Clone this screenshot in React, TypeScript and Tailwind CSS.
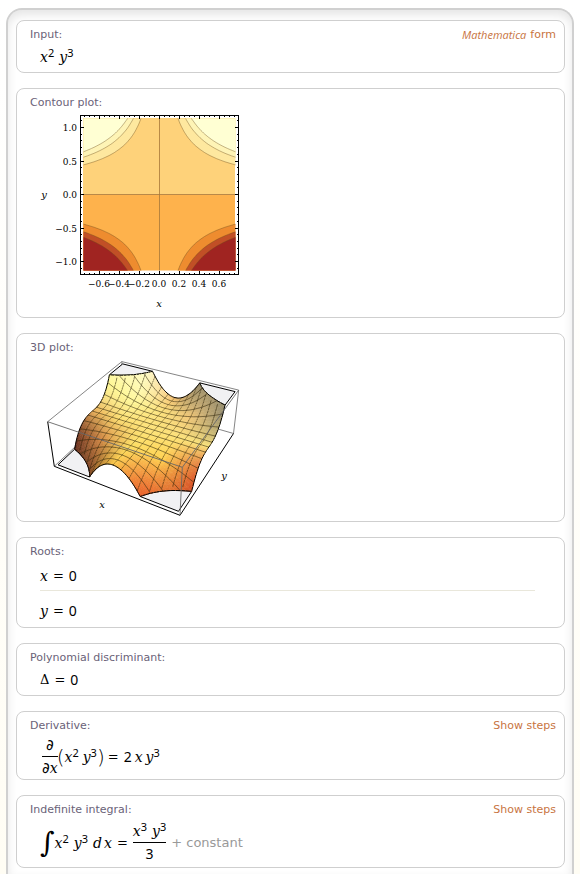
import type { ReactNode } from "react";

const X_MAX = 0.76;
const Y_MAX = 1.135;
const Z_MAX = 0.15;

type Point = [number, number];

const toPoints = (points: Point[]) =>
  points.map(([x, y]) => `${x.toFixed(1)},${y.toFixed(1)}`).join(" ");

/* ---------- contour plot ---------- */

const CX = 159.5;
const CY = 194.5;

// Level curve of x^2 y^3 = level, in one quadrant
const levelCurve = (level: number, sx: number, sy: number): Point[] => {
  const points: Point[] = [];
  const yStart = Math.cbrt(level / (X_MAX * X_MAX));
  for (let i = 0; i <= 30; i++) {
    const y = yStart + ((Y_MAX - yStart) * i) / 30;
    const x = Math.sqrt(level / (y * y * y));
    points.push([CX + sx * x * 100, CY - sy * y * 67]);
  }
  return points;
};

const bands = [
  { level: 0.05, top: "#fee89f", bottom: "#ee8c2f" },
  { level: 0.1, top: "#fef4b6", bottom: "#c14f26" },
  { level: 0.15, top: "#ffffd3", bottom: "#a02421" },
];

const xTicks = Array.from({ length: 31 }, (_, i) => i - 15);
const yTicks = Array.from({ length: 23 }, (_, i) => i - 11);
const xLabels = ["−0.6", "−0.4", "−0.2", "0.0", "0.2", "0.4", "0.6"];
const yLabels = ["1.0", "0.5", "0.0", "−0.5", "−1.0"];

const ContourPlot = () => (
  <svg width="220" height="200" viewBox="30 111 220 200" role="img" aria-label="Contour plot">
    <rect x="83" y="118" width="152" height="76.5" fill="#fed27a" />
    <rect x="83" y="194.5" width="152" height="76" fill="#feb24c" />
    {bands.map((band) =>
      [-1, 1].map((sx) =>
        [-1, 1].map((sy) => {
          const curve = levelCurve(band.level, sx, sy);
          const corner: Point = [CX + sx * 76, CY - sy * 76];
          return (
            <g key={`${band.level}${sx}${sy}`}>
              <polygon points={toPoints([...curve, corner])} fill={sy > 0 ? band.top : band.bottom} />
              <polyline points={toPoints(curve)} fill="none" stroke="#6b4a1c" strokeOpacity="0.5" strokeWidth="0.8" />
            </g>
          );
        })
      )
    )}
    <path d="M83.5 194.5H235.5M159.5 118V270.5" stroke="#a8783a" strokeOpacity="0.8" />
    <rect x="80.5" y="115.5" width="158" height="159" fill="none" stroke="#000" />
    {xTicks.map((t) => {
      const x = CX + t * 5;
      const size = t % 4 === 0 ? 4 : 2;
      return <path key={t} d={`M${x} 115v${size}M${x} 275v${-size}`} stroke="#000" />;
    })}
    {yTicks.map((t) => {
      const y = Math.round(194 - t * 6.7) + 0.5;
      const size = t % 5 === 0 ? 4 : 2;
      return <path key={t} d={`M80 ${y}h${size}M239 ${y}h${-size}`} stroke="#000" />;
    })}
    <g className="font-['DejaVu_Serif',serif] text-[9px]">
      {yLabels.map((label, i) => (
        <text key={label} x="77" y={131 + Math.round(i * 33.5)} textAnchor="end">
          {label}
        </text>
      ))}
      {xLabels.map((label, i) => (
        <text key={label} x={99 + i * 20} y="287" textAnchor="middle">
          {label}
        </text>
      ))}
      <text x="44" y="198" textAnchor="middle" className="text-[10px] italic">y</text>
      <text x="159" y="307" textAnchor="middle" className="text-[10px] italic">x</text>
    </g>
  </svg>
);

/* ---------- 3D plot ---------- */

// Perspective projection of the unit box
const project = (u: number, v: number, w: number): Point => {
  const depth = 1 - 0.1315 * u + 0.205 * v - 0.0639 * w;
  return [
    (54.3 + 102.03 * u + 94.33 * v - 9.65 * w) / depth,
    (466.3 - 18.76 * u + 17.82 * v - 71.55 * w) / depth,
  ];
};

const pad = (t: number) => 0.5 + t * 0.48;
const surface = (x: number, y: number) =>
  project(pad(x / X_MAX), pad(y / Y_MAX), pad((x * x * y * y * y) / Z_MAX));
const xLimit = (y: number) =>
  Math.min(X_MAX, Math.sqrt(Z_MAX / Math.max(Math.abs(y * y * y), 0.0001)));

// Lit colours, front row first, left to right
const palette = [
  [[10, 0, 0], [104, 48, 28], [253, 200, 72], [228, 76, 38], [170, 20, 16]],
  [[112, 52, 34], [214, 140, 70], [252, 222, 100], [255, 210, 80], [220, 88, 42]],
  [[232, 170, 86], [252, 222, 112], [253, 226, 120], [253, 226, 120], [250, 226, 122]],
  [[255, 248, 150], [255, 248, 156], [253, 226, 124], [240, 198, 120], [156, 146, 112]],
  [[255, 254, 232], [255, 252, 208], [244, 190, 112], [130, 126, 102], [100, 104, 94]],
];

const shade = (u: number, v: number) => {
  const i = Math.min(3, Math.floor(u * 4));
  const j = Math.min(3, Math.floor(v * 4));
  const fu = u * 4 - i;
  const fv = v * 4 - j;
  const channels = [0, 1, 2].map((c) =>
    Math.round(
      (palette[j][i][c] * (1 - fu) + palette[j][i + 1][c] * fu) * (1 - fv) +
        (palette[j + 1][i][c] * (1 - fu) + palette[j + 1][i + 1][c] * fu) * fv
    )
  );
  return `rgb(${channels.join(",")})`;
};

const ROWS = 64;
const COLS = 40;
const MESH = 16;

const rows = Array.from({ length: ROWS }, (_, i) => ROWS - 1 - i);
const cols = Array.from({ length: COLS }, (_, i) => i);
const meshXs = Array.from({ length: MESH - 1 }, (_, i) => ((i + 1) / MESH) * 2 * X_MAX - X_MAX);

const rowLine = (y: number) =>
  Array.from({ length: COLS + 1 }, (_, i) => surface(((2 * i) / COLS - 1) * xLimit(y), y));

const SurfaceRow = ({ row }: { row: number }) => {
  const y0 = ((2 * row) / ROWS - 1) * Y_MAX;
  const y1 = ((2 * (row + 1)) / ROWS - 1) * Y_MAX;
  const near = rowLine(y0);
  const far = rowLine(y1);
  return (
    <g>
      {cols.map((i) => {
        const x = ((2 * i + 1) / COLS - 1) * xLimit((y0 + y1) / 2);
        const fill = shade((x / X_MAX + 1) / 2, (row + 0.5) / ROWS);
        return (
          <polygon
            key={i}
            points={toPoints([near[i], near[i + 1], far[i + 1], far[i]])}
            fill={fill}
            stroke={fill}
            strokeWidth="0.6"
          />
        );
      })}
      {meshXs
        .filter((x) => Math.abs(x) <= Math.min(xLimit(y0), xLimit(y1)))
        .map((x) => (
          <polyline key={x} points={toPoints([surface(x, y0), surface(x, y1)])} stroke="#2c2208" strokeOpacity="0.8" strokeWidth="0.7" />
        ))}
      {(row + 1) % (ROWS / MESH) === 0 && row + 1 < ROWS && (
        <polyline points={toPoints(far)} fill="none" stroke="#2c2208" strokeOpacity="0.8" strokeWidth="0.7" />
      )}
      <polyline points={toPoints([near[0], far[0]])} stroke="#000" />
      <polyline points={toPoints([near[COLS], far[COLS]])} stroke="#000" />
    </g>
  );
};

// Flat area left where the surface is cut at the top or bottom of the box
const cutArea = (sx: number, sy: number): Point[] => {
  const start = Math.cbrt(Z_MAX / (X_MAX * X_MAX));
  const points: Point[] = [];
  for (let i = 0; i <= 16; i++) {
    const y = start + ((Y_MAX - start) * i) / 16;
    points.push(surface(sx * Math.sqrt(Z_MAX / (y * y * y)), sy * y));
  }
  points.push(project(pad(sx), pad(sy), pad(sy)));
  return points;
};

const SurfacePlot = () => (
  <svg width="220" height="160" viewBox="30 356 220 160" role="img" aria-label="3D plot">
    <g fill="none" stroke="#777" strokeWidth="0.9">
      <polyline points={toPoints([project(0, 0, 1), project(0, 1, 1), project(1, 1, 1), project(1, 1, 0), project(0, 1, 0), project(0, 0, 0)])} />
      <polyline points={toPoints([project(0, 1, 0), project(0, 1, 1)])} />
    </g>
    {[-1, 1].map((sx) =>
      [-1, 1].map((sy) => (
        <polygon key={`${sx}${sy}`} points={toPoints(cutArea(sx, sy))} fill="#f1f1f3" stroke="#000" />
      ))
    )}
    {rows.map((row) => (
      <SurfaceRow key={row} row={row} />
    ))}
    <polyline points={toPoints(rowLine(-Y_MAX))} fill="none" stroke="#000" />
    <polyline points={toPoints(rowLine(Y_MAX))} fill="none" stroke="#000" />
    <g fill="none" stroke="#000">
      <polyline points={toPoints([project(0, 0, 1), project(0, 0, 0), project(1, 0, 0), project(1, 1, 0)])} />
    </g>
    <g fill="none" stroke="#666" strokeWidth="0.9">
      <polyline points={toPoints([project(0, 0, 1), project(1, 0, 1), project(1, 1, 1)])} />
      <polyline points={toPoints([project(1, 0, 0), project(1, 0, 1)])} />
    </g>
    <g className="font-['DejaVu_Serif',serif] text-[10px] italic">
      <text x="102" y="508" textAnchor="middle">x</text>
      <text x="224" y="479" textAnchor="middle">y</text>
    </g>
  </svg>
);

/* ---------- math ---------- */

const Var = ({ name, power }: { name: string; power?: number }) => (
  <span className="font-['DejaVu_Serif',serif] text-sm leading-6 italic">
    {name}
    {power && (
      <sup className="relative -top-[5px] align-baseline font-['Noto_Sans',sans-serif] text-[11px] leading-none not-italic">
        {power}
      </sup>
    )}
  </span>
);

const Num = ({ children }: { children: ReactNode }) => (
  <span className="font-['Noto_Sans',sans-serif] text-sm leading-6">{children}</span>
);

const Paren = ({ children }: { children: ReactNode }) => (
  <span className="text-xl font-extralight">{children}</span>
);

const Partial = () => <span className="text-[15px]">∂</span>;

const Fraction = ({ top, bottom }: { top: ReactNode; bottom: ReactNode }) => (
  <span className="flex flex-col items-center">
    <span className="flex h-[22px] items-center gap-[5px]">{top}</span>
    <span className="w-full border-t border-black" />
    <span className="flex h-[22px] items-center">{bottom}</span>
  </span>
);

const MathLine = ({ children }: { children: ReactNode }) => (
  <div className="flex items-center gap-[5px] font-['DejaVu_Sans',sans-serif] text-[13px] leading-6 text-black">
    {children}
  </div>
);

/* ---------- page ---------- */

type PodProps = { title: string; action?: ReactNode; children: ReactNode };

const Pod = ({ title, action, children }: PodProps) => (
  <section className="rounded-lg border border-[#cfcfcf] bg-white pt-1.5 pr-2 pl-[13px]">
    <div className="flex h-4 items-start justify-between font-['DejaVu_Sans',sans-serif] text-[11px] leading-4">
      <h2 className="text-[#6a6278]">{title}</h2>
      {action && (
        <a href="#" className="flex gap-1 text-[#c8743f]">
          {action}
        </a>
      )}
    </div>
    {children}
  </section>
);

export default function App() {
  return (
    <div className="min-h-screen bg-linear-to-b from-white to-[#fffdf4] px-1.5 pt-2">
      <main className="flex flex-col gap-[15px] rounded-t-2xl border-2 border-b-0 border-[#d0d0d0] bg-white pt-2.5 pr-[7px] pb-1.5 pl-2 shadow-[inset_0_5px_10px_#e6e6e6]">
        <Pod
          title="Input:"
          action={
            <>
              <i className="font-['Open_Sans',sans-serif]">Mathematica</i>
              <span>form</span>
            </>
          }
        >
          <div className="pt-0.5 pb-[3px] pl-2.5">
            <MathLine>
              <Var name="x" power={2} />
              <Var name="y" power={3} />
            </MathLine>
          </div>
        </Pod>

        <Pod title="Contour plot:">
          <div className="pb-1.5">
            <ContourPlot />
          </div>
        </Pod>

        <Pod title="3D plot:">
          <div className="pb-[5px]">
            <SurfacePlot />
          </div>
        </Pod>

        <Pod title="Roots:">
          <div className="mr-[21px] ml-2.5 border-b border-[#e9e7db] pt-1 pb-0.5">
            <MathLine>
              <Var name="x" />
              <span>=</span>
              <Num>0</Num>
            </MathLine>
          </div>
          <div className="ml-2.5 pt-2 pb-1">
            <MathLine>
              <Var name="y" />
              <span>=</span>
              <Num>0</Num>
            </MathLine>
          </div>
        </Pod>

        <Pod title="Polynomial discriminant:">
          <div className="pt-0.5 pb-[3px] pl-2.5">
            <MathLine>
              <span className="font-['DejaVu_Serif',serif]">Δ</span>
              <span>=</span>
              <Num>0</Num>
            </MathLine>
          </div>
        </Pod>

        <Pod title="Derivative:" action="Show steps">
          <div className="pl-3">
            <MathLine>
              <Fraction top={<Partial />} bottom={<><Partial /><Var name="x" /></>} />
              <span className="-ml-1.5 flex items-center">
                <Paren>(</Paren>
                <span className="flex gap-1">
                  <Var name="x" power={2} />
                  <Var name="y" power={3} />
                </span>
                <Paren>)</Paren>
              </span>
              <span className="-ml-0.5">=</span>
              <span className="flex gap-[3px]">
                <Num>2</Num>
                <Var name="x" />
                <Var name="y" power={3} />
              </span>
            </MathLine>
          </div>
        </Pod>

        <Pod title="Indefinite integral:" action="Show steps">
          <div className="pt-0.5 pb-0.5 pl-2.5">
            <MathLine>
              <span className="flex items-center">
                <span className="font-['DejaVu_Serif',serif] text-[28px]">∫</span>
                <Var name="x" power={2} />
              </span>
              <Var name="y" power={3} />
              <span className="flex gap-0.5">
                <Var name="d" />
                <Var name="x" />
              </span>
              <span>=</span>
              <Fraction
                top={<><Var name="x" power={3} /><Var name="y" power={3} /></>}
                bottom={<Num>3</Num>}
              />
              <span className="text-[#999]">+ constant</span>
            </MathLine>
          </div>
        </Pod>
      </main>
    </div>
  );
}
